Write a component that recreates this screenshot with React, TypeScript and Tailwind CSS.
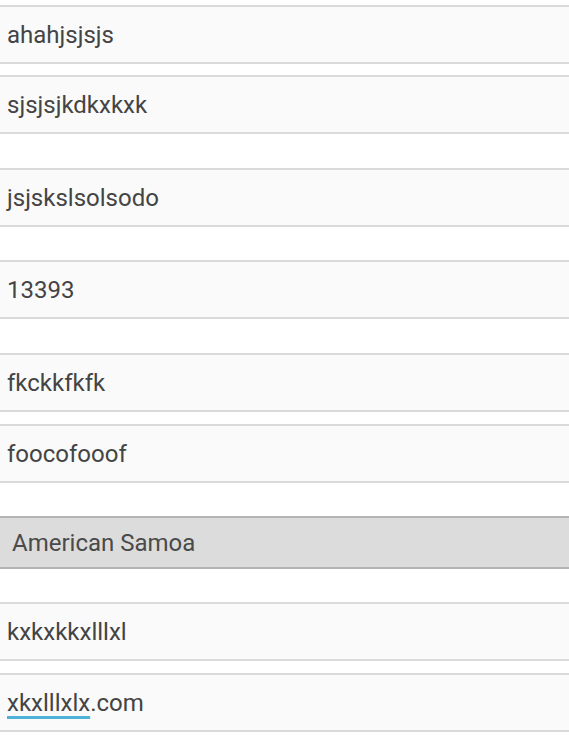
import React from 'react'

type Field = {
  value: React.ReactNode
  gap: string
  select?: boolean
}

// form fields, top gap each
const fields: Field[] = [
  { value: 'ahahjsjsjs', gap: 'mt-[5px]' },
  { value: 'sjsjsjkdkxkxk', gap: 'mt-[11px]' },
  { value: 'jsjskslsolsodo', gap: 'mt-[34px]' },
  { value: '13393', gap: 'mt-[33px]' },
  { value: 'fkckkfkfk', gap: 'mt-[34px]' },
  { value: 'foocofooof', gap: 'mt-[12px]' },
  { value: 'American Samoa', gap: 'mt-[33px]', select: true },
  { value: 'kxkxkkxlllxl', gap: 'mt-[33px]' },
  {
    value: (
      <>
        <span className="underline decoration-[#4fb3d9] decoration-[3px] underline-offset-[5px]">xkxlllxlx</span>
        .com
      </>
    ),
    gap: 'mt-[12px]',
  },
]

export default function App() {
  return (
    <div className="w-[569px] h-[743px] bg-white overflow-hidden flex flex-col" style={{ fontFamily: 'Roboto, "Noto Sans", sans-serif' }}>
      {fields.map((f, i) =>
        f.select ? (
          <div
            key={i}
            className={`${f.gap} h-[53px] flex items-center pl-[12px] bg-[#dcdcdc] border-y-2 border-[#b4b4b4] text-[24px] text-[#4a4a4a]`}
          >
            {f.value}
          </div>
        ) : (
          <div
            key={i}
            className={`${f.gap} h-[59px] flex items-center pl-[7px] bg-[#fafafa] border-y-2 border-[#dadada] text-[24px] text-[#444444]`}
          >
            <span>{f.value}</span>
          </div>
        )
      )}
    </div>
  )
}
